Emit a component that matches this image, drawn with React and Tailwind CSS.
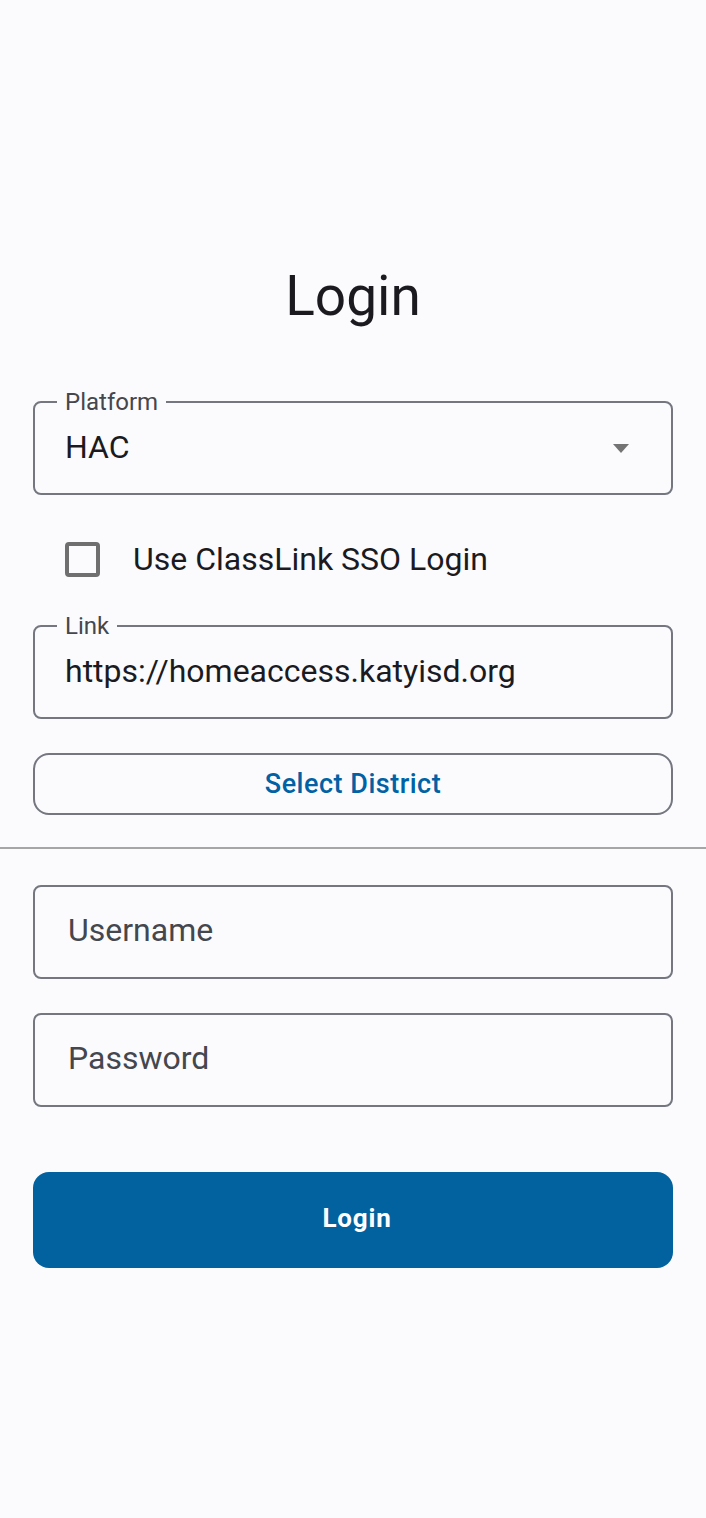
import { useState } from "react";

const FONT = { fontFamily: "Roboto, 'Noto Sans', sans-serif" };

function OutlinedField({ label, value, placeholder, trailing, className = "" }) {
  return (
    <div className={`relative h-[94px] rounded-[8px] border-2 border-[#74777f] flex items-center ${className}`}>
      {label && (
        <span className="absolute -top-[15px] left-[22px] bg-[#fbfbfe] px-[8px] text-[24px] leading-[28px] text-[#44474e]">
          {label}
        </span>
      )}
      {value ? (
        <span className="pl-[30px] -mt-[2px] text-[32px] text-[#1b1b1f]">{value}</span>
      ) : (
        <span className="pl-[33px] -mt-[5px] text-[32px] text-[#44474e]">{placeholder}</span>
      )}
      {trailing}
    </div>
  );
}

export default function App() {
  const [sso, setSso] = useState(false);

  return (
    <div className="min-h-[1518px] bg-[#fbfbfe]" style={FONT}>
      <div className="pt-[264px] text-center text-[55px] leading-[64px] text-[#1b1b1f]">Login</div>

      <div className="px-[33px]">
        <OutlinedField
          className="mt-[73px]"
          label="Platform"
          value="HAC"
          trailing={
            <svg className="absolute right-[42px] top-[41px]" width="16" height="9" viewBox="0 0 16 9">
              <path d="M0 0h16L8 9z" fill="#747474" />
            </svg>
          }
        />

        <label className="mt-[47px] flex h-[34px] items-center pl-[32px] cursor-pointer">
          <input type="checkbox" className="hidden" checked={sso} onChange={() => setSso(!sso)} />
          <span className="h-[35px] w-[35px] rounded-[4px] border-[4px] border-[#6f6f6f]" />
          <span className="ml-[33px] text-[32px] text-[#1b1b1f]">Use ClassLink SSO Login</span>
        </label>

        <OutlinedField className="mt-[49px]" label="Link" value="https://homeaccess.katyisd.org" />

        <button className="mt-[34px] h-[62px] w-full rounded-[16px] border-2 border-[#74777f] text-[27px] tracking-[0.5px] font-medium text-[#0061a4]">
          Select District
        </button>
      </div>

      <div className="mt-[32px] h-[2px] bg-[#a6a6a6]" />

      <div className="px-[33px]">
        <OutlinedField className="mt-[36px]" placeholder="Username" />
        <OutlinedField className="mt-[34px]" placeholder="Password" />

        <button className="mt-[65px] h-[96px] w-full rounded-[16px] bg-[#02629f] pl-[8px] pb-[3px] text-[26px] tracking-[0.8px] font-bold text-white">
          Login
        </button>
      </div>
    </div>
  );
}
